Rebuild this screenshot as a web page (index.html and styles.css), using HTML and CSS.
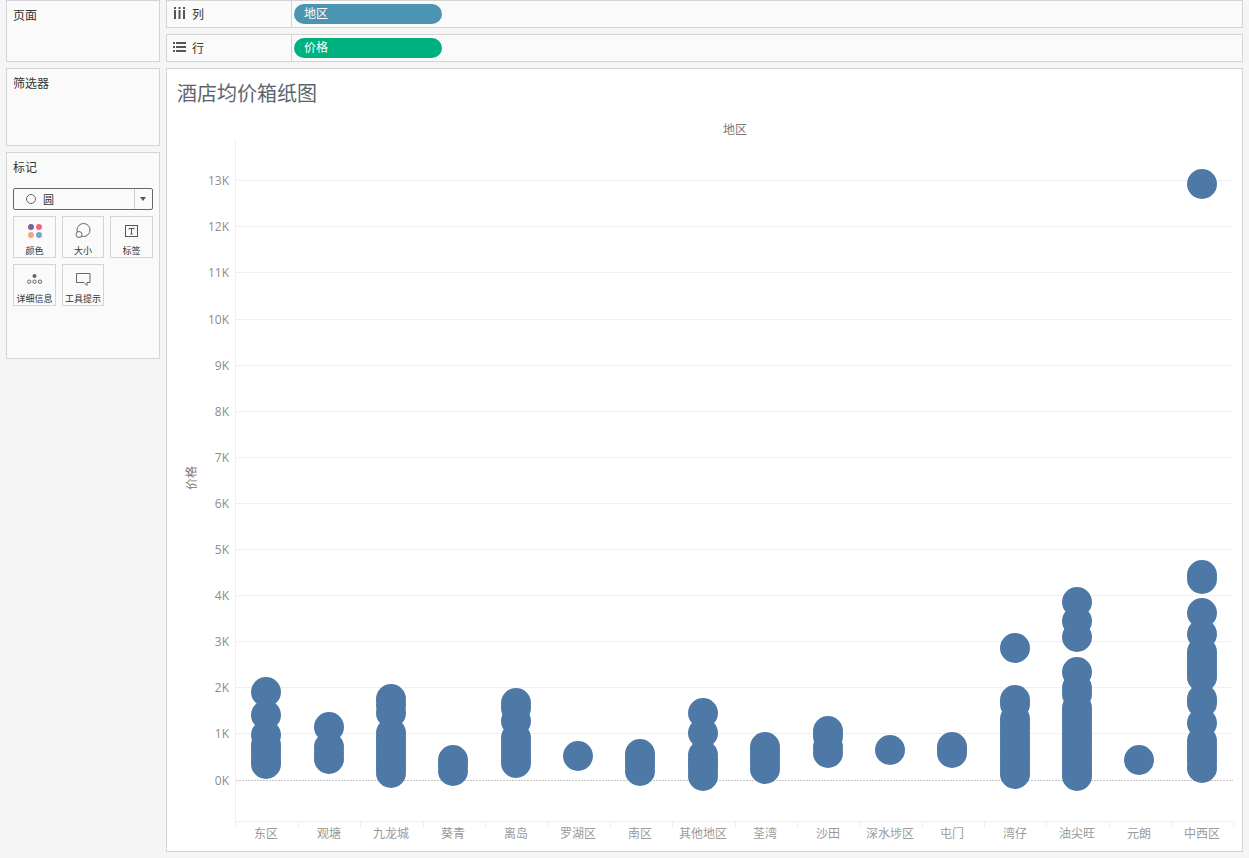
FILE: index.html
```html
<!DOCTYPE html>
<html lang="zh-CN">
<head>
    <meta charset="UTF-8">
    <title>酒店均价箱纸图</title>
    <link rel="stylesheet" href="styles.css">
</head>
<body>
    <div class="sidebar">
        <div class="card pages-card"><div class="card-title">页面</div></div>
        <div class="card filters-card"><div class="card-title">筛选器</div></div>
        <div class="card marks-card">
            <div class="card-title">标记</div>
            <div class="mark-select">
                <svg class="mark-select-icon" width="12" height="12" viewBox="0 0 12 12"><circle cx="6" cy="6" r="4.5" fill="none" stroke="#666" stroke-width="1"/></svg>
                <span class="mark-select-text">圆</span>
                <span class="mark-select-arrow"></span>
            </div>
            <div class="mark-buttons">
                <div class="mark-btn">
                    <svg width="18" height="18" viewBox="0 0 18 18">
                        <circle cx="5" cy="5" r="3" fill="#7b6291"/>
                        <circle cx="13" cy="5" r="3" fill="#ec6a7e"/>
                        <circle cx="5" cy="13" r="3" fill="#f2a67c"/>
                        <circle cx="13" cy="13" r="3" fill="#7ba3cd"/>
                    </svg>
                    <span>颜色</span>
                </div>
                <div class="mark-btn">
                    <svg width="18" height="18" viewBox="0 0 18 18" fill="none" stroke="#666">
                        <circle cx="9.500" cy="8" r="6.500"/>
                        <circle cx="5" cy="12.500" r="3" fill="#fafafa"/>
                    </svg>
                    <span>大小</span>
                </div>
                <div class="mark-btn">
                    <svg width="18" height="18" viewBox="0 0 18 18">
                        <rect x="2.500" y="3.500" width="12" height="11" fill="none" stroke="#555"/>
                        <path d="M6 7.500V6.500h5v1M8.500 6.500v5.500M7.300 12h2.400" fill="none" stroke="#555"/>
                    </svg>
                    <span>标签</span>
                </div>
                <div class="mark-btn">
                    <svg width="18" height="18" viewBox="0 0 18 18" fill="none" stroke="#666">
                        <circle cx="8.500" cy="6" r="2" fill="#666" stroke="none"/>
                        <circle cx="3.200" cy="11.700" r="1.700"/>
                        <circle cx="8.500" cy="11.700" r="1.700"/>
                        <circle cx="14" cy="11.700" r="1.700"/>
                    </svg>
                    <span>详细信息</span>
                </div>
                <div class="mark-btn">
                    <svg width="18" height="18" viewBox="0 0 18 18">
                        <path d="M2.500 3.500h13.500v9h-3v3l-3-3H2.500z" fill="none" stroke="#666"/>
                    </svg>
                    <span>工具提示</span>
                </div>
            </div>
        </div>
    </div>

    <div class="main">
        <div class="shelf shelf-cols">
            <div class="shelf-label">
                <svg width="14" height="12" viewBox="0 0 14 12" fill="#555"><path d="M1 0h2v2H1zM5.500 0h2v2h-2zM10 0h2v2h-2zM1 3h2v9H1zM5.500 3h2v9h-2zM10 3h2v9h-2z"/></svg>
                <span>列</span>
            </div>
            <div class="shelf-body"><div class="pill pill-dim">地区</div></div>
        </div>
        <div class="shelf">
            <div class="shelf-label">
                <svg width="14" height="12" viewBox="0 0 14 12" fill="#555"><path d="M0 1h2v2H0zM3 1h10v2H3zM0 5h2v2H0zM3 5h10v2H3zM0 9h2v2H0zM3 9h10v2H3z"/></svg>
                <span>行</span>
            </div>
            <div class="shelf-body"><div class="pill pill-measure">价格</div></div>
        </div>

        <div class="viz">
            <div class="viz-title">酒店均价箱纸图</div>
            <svg class="chart" width="1075" height="732" viewBox="167 120 1075 732">
                <g class="grid">
                    <path d="M235.500 180.500H1233M235.500 226.500H1233M235.500 272.500H1233M235.500 319.500H1233M235.500 365.500H1233M235.500 411.500H1233M235.500 457.500H1233M235.500 503.500H1233M235.500 549.500H1233M235.500 595.500H1233M235.500 641.500H1233M235.500 687.500H1233M235.500 733.500H1233"/>
                    <path d="M235.500 139V828M235.500 821.500H1233"/>
                    <path d="M298.500 822v6M360.500 822v6M423.500 822v6M485.500 822v6M547.500 822v6M610.500 822v6M672.500 822v6M735.500 822v6M797.500 822v6M859.500 822v6M922.500 822v6M984.500 822v6M1046.500 822v6M1109.500 822v6M1171.500 822v6M1233.500 822v6"/>
                </g>
                <path class="zero-line" d="M236 780.500H1233"/>

                <text class="axis-title" x="735" y="134" text-anchor="middle">地区</text>
                <text class="axis-title" transform="translate(196 478) rotate(-90)" text-anchor="middle">价格</text>

                <g class="y-labels" text-anchor="end">
                    <text x="229" y="185">13K</text>
                    <text x="229" y="231">12K</text>
                    <text x="229" y="277">11K</text>
                    <text x="229" y="324">10K</text>
                    <text x="229" y="370">9K</text>
                    <text x="229" y="416">8K</text>
                    <text x="229" y="462">7K</text>
                    <text x="229" y="508">6K</text>
                    <text x="229" y="554">5K</text>
                    <text x="229" y="600">4K</text>
                    <text x="229" y="646">3K</text>
                    <text x="229" y="692">2K</text>
                    <text x="229" y="738">1K</text>
                    <text x="229" y="785">0K</text>
                </g>

                <g class="x-labels" text-anchor="middle">
                    <text x="266" y="838">东区</text>
                    <text x="329" y="838">观塘</text>
                    <text x="391" y="838">九龙城</text>
                    <text x="453" y="838">葵青</text>
                    <text x="516" y="838">离岛</text>
                    <text x="578" y="838">罗湖区</text>
                    <text x="640" y="838">南区</text>
                    <text x="703" y="838">其他地区</text>
                    <text x="765" y="838">荃湾</text>
                    <text x="828" y="838">沙田</text>
                    <text x="890" y="838">深水埗区</text>
                    <text x="952" y="838">屯门</text>
                    <text x="1015" y="838">湾仔</text>
                    <text x="1077" y="838">油尖旺</text>
                    <text x="1139" y="838">元朗</text>
                    <text x="1202" y="838">中西区</text>
                </g>

                <g class="marks">
                    <!-- 东区 -->
                    <circle cx="266" cy="692" r="15"/><circle cx="266" cy="715" r="15"/><circle cx="266" cy="735" r="15"/><circle cx="266" cy="745" r="15"/><circle cx="266" cy="750" r="15"/><circle cx="266" cy="755" r="15"/><circle cx="266" cy="760" r="15"/><circle cx="266" cy="764" r="15"/>
                    <!-- 观塘 -->
                    <circle cx="329" cy="727" r="15"/><circle cx="329" cy="747" r="15"/><circle cx="329" cy="753" r="15"/><circle cx="329" cy="759" r="15"/>
                    <!-- 九龙城 -->
                    <circle cx="391" cy="699" r="15"/><circle cx="391" cy="705" r="15"/><circle cx="391" cy="713" r="15"/><circle cx="391" cy="733" r="15"/><circle cx="391" cy="738" r="15"/><circle cx="391" cy="743" r="15"/><circle cx="391" cy="748" r="15"/><circle cx="391" cy="753" r="15"/><circle cx="391" cy="758" r="15"/><circle cx="391" cy="763" r="15"/><circle cx="391" cy="768" r="15"/><circle cx="391" cy="773" r="15"/>
                    <!-- 葵青 -->
                    <circle cx="453" cy="760" r="15"/><circle cx="453" cy="765" r="15"/><circle cx="453" cy="771" r="15"/>
                    <!-- 离岛 -->
                    <circle cx="516" cy="703" r="15"/><circle cx="516" cy="708" r="15"/><circle cx="516" cy="721" r="15"/><circle cx="516" cy="738" r="15"/><circle cx="516" cy="743" r="15"/><circle cx="516" cy="748" r="15"/><circle cx="516" cy="753" r="15"/><circle cx="516" cy="758" r="15"/><circle cx="516" cy="763" r="15"/>
                    <!-- 罗湖区 -->
                    <circle cx="578" cy="756" r="15"/>
                    <!-- 南区 -->
                    <circle cx="640" cy="754" r="15"/><circle cx="640" cy="759" r="15"/><circle cx="640" cy="765" r="15"/><circle cx="640" cy="771" r="15"/>
                    <!-- 其他地区 -->
                    <circle cx="703" cy="713" r="15"/><circle cx="703" cy="733" r="15"/><circle cx="703" cy="755" r="15"/><circle cx="703" cy="760" r="15"/><circle cx="703" cy="765" r="15"/><circle cx="703" cy="770" r="15"/><circle cx="703" cy="776" r="15"/>
                    <!-- 荃湾 -->
                    <circle cx="765" cy="747" r="15"/><circle cx="765" cy="752" r="15"/><circle cx="765" cy="758" r="15"/><circle cx="765" cy="763" r="15"/><circle cx="765" cy="769" r="15"/>
                    <!-- 沙田 -->
                    <circle cx="828" cy="731" r="15"/><circle cx="828" cy="736" r="15"/><circle cx="828" cy="747" r="15"/><circle cx="828" cy="753" r="15"/>
                    <!-- 深水埗区 -->
                    <circle cx="890" cy="750" r="15"/>
                    <!-- 屯门 -->
                    <circle cx="952" cy="747" r="15"/><circle cx="952" cy="750" r="15"/><circle cx="952" cy="753" r="15"/>
                    <!-- 湾仔 -->
                    <circle cx="1015" cy="648" r="15"/><circle cx="1015" cy="700" r="15"/><circle cx="1015" cy="704" r="15"/><circle cx="1015" cy="719" r="15"/><circle cx="1015" cy="724" r="15"/><circle cx="1015" cy="729" r="15"/><circle cx="1015" cy="734" r="15"/><circle cx="1015" cy="739" r="15"/><circle cx="1015" cy="744" r="15"/><circle cx="1015" cy="749" r="15"/><circle cx="1015" cy="754" r="15"/><circle cx="1015" cy="759" r="15"/><circle cx="1015" cy="764" r="15"/><circle cx="1015" cy="769" r="15"/><circle cx="1015" cy="774" r="15"/>
                    <!-- 油尖旺 -->
                    <circle cx="1077" cy="602" r="15"/><circle cx="1077" cy="621" r="15"/><circle cx="1077" cy="637" r="15"/><circle cx="1077" cy="672" r="15"/><circle cx="1077" cy="688" r="15"/><circle cx="1077" cy="694" r="15"/><circle cx="1077" cy="708" r="15"/><circle cx="1077" cy="713" r="15"/><circle cx="1077" cy="718" r="15"/><circle cx="1077" cy="723" r="15"/><circle cx="1077" cy="728" r="15"/><circle cx="1077" cy="733" r="15"/><circle cx="1077" cy="738" r="15"/><circle cx="1077" cy="743" r="15"/><circle cx="1077" cy="748" r="15"/><circle cx="1077" cy="753" r="15"/><circle cx="1077" cy="758" r="15"/><circle cx="1077" cy="763" r="15"/><circle cx="1077" cy="768" r="15"/><circle cx="1077" cy="776" r="15"/><circle cx="1077" cy="772" r="15"/>
                    <!-- 中西区 -->
                    <circle cx="1202" cy="184" r="15"/><circle cx="1202" cy="575" r="15"/><circle cx="1202" cy="579" r="15"/><circle cx="1202" cy="613" r="15"/><circle cx="1202" cy="634" r="15"/><circle cx="1202" cy="652" r="15"/><circle cx="1202" cy="657" r="15"/><circle cx="1202" cy="662" r="15"/><circle cx="1202" cy="667" r="15"/><circle cx="1202" cy="672" r="15"/><circle cx="1202" cy="677" r="15"/><circle cx="1202" cy="699" r="15"/><circle cx="1202" cy="703" r="15"/><circle cx="1202" cy="723" r="15"/><circle cx="1202" cy="741" r="15"/><circle cx="1202" cy="746" r="15"/><circle cx="1202" cy="751" r="15"/><circle cx="1202" cy="756" r="15"/><circle cx="1202" cy="761" r="15"/><circle cx="1202" cy="768" r="15"/>
                    <!-- 元朗 -->
                    <circle cx="1139" cy="760" r="15"/>
                </g>
            </svg>
        </div>
    </div>
</body>
</html>
```

FILE: styles.css
```css
/* General Styling */
html, body {
    height: 100%;
}

body {
    margin: 0;
    padding: 0 6px;
    height: 858px;
    overflow: hidden;
    box-sizing: border-box;
    background-color: #f5f5f5;
    color: #333;
    font-family: "Noto Sans CJK SC", "Noto Sans", sans-serif;
    font-size: 12px;
    display: grid;
    grid-template-columns: 154px 1077px;
    column-gap: 6px;
    align-items: start;
}

/* Left column */
.sidebar {
    display: flex;
    flex-direction: column;
    gap: 6px;
}

.card {
    box-sizing: border-box;
    background: #fafafa;
    border: 1px solid #d4d4d4;
    padding: 6px;
}

.card-title {
    line-height: 16px;
}

.pages-card {
    height: 62px;
}

.filters-card {
    height: 78px;
    padding-top: 6px;
}

.marks-card {
    height: 207px;
    padding-top: 6px;
}

.mark-select {
    box-sizing: border-box;
    height: 22px;
    margin-top: 13px;
    border: 1px solid #666;
    border-radius: 2px;
    display: flex;
    align-items: center;
    position: relative;
}

.mark-select-icon {
    margin-left: 11px;
}

.mark-select-text {
    margin-left: 6px;
    font-size: 11px;
}

.mark-select-arrow {
    margin-left: auto;
    width: 18px;
    height: 20px;
    border-left: 1px solid #ccc;
    box-sizing: border-box;
    position: relative;
}

.mark-select-arrow::after {
    content: "";
    position: absolute;
    top: 8px;
    left: 5px;
    border-left: 3.500px solid transparent;
    border-right: 3.500px solid transparent;
    border-top: 4px solid #555;
}

.mark-buttons {
    margin-top: 6px;
    display: grid;
    grid-template-columns: 43px 42px 43px;
    grid-auto-rows: 42px;
    gap: 6px;
}

.mark-btn {
    box-sizing: border-box;
    border: 1px solid #d4d4d4;
    display: flex;
    flex-direction: column;
    align-items: center;
    padding-top: 5px;
    font-size: 9px;
    line-height: 12px;
    white-space: nowrap;
}

.mark-btn span {
    margin-top: 5px;
}

/* Right column */
.main {
    display: flex;
    flex-direction: column;
}

.shelf {
    box-sizing: border-box;
    height: 28px;
    background: #fafafa;
    border: 1px solid #d4d4d4;
    display: flex;
    margin-bottom: 6px;
}

.shelf-label {
    box-sizing: border-box;
    width: 125px;
    border-right: 1px solid #d4d4d4;
    display: flex;
    align-items: center;
    gap: 5px;
    padding: 0 0 2px 6px;
}

.shelf-body {
    flex: 1;
    display: flex;
    align-items: center;
    padding-left: 2px;
}

.pill {
    box-sizing: border-box;
    width: 148px;
    height: 20px;
    border-radius: 10px;
    padding-left: 10px;
    color: #fff;
    line-height: 18px;
}

.pill-dim {
    background-color: #4c95b2;
}

.pill-measure {
    background-color: #00b180;
}

.viz {
    box-sizing: border-box;
    height: 784px;
    background: #fff;
    border: 1px solid #d4d4d4;
}

.viz-title {
    height: 51px;
    box-sizing: border-box;
    padding: 9px 0 0 10px;
    font-size: 20px;
    line-height: 30px;
    color: #5d6670;
}

.chart {
    display: block;
}

.grid path {
    fill: none;
    stroke: #f0f0f0;
    stroke-width: 1;
}

.zero-line {
    fill: none;
    stroke: #c4c4c4;
    stroke-width: 1;
    stroke-dasharray: 2 1;
}

.axis-title {
    font-size: 12px;
    fill: #777;
}

.y-labels text {
    font-family: "Open Sans", sans-serif;
    font-size: 12px;
    fill: #8c8c8c;
}

.x-labels text {
    font-size: 12px;
    fill: #9a9a9a;
}

.marks circle {
    fill: #4e79a7;
}
```
